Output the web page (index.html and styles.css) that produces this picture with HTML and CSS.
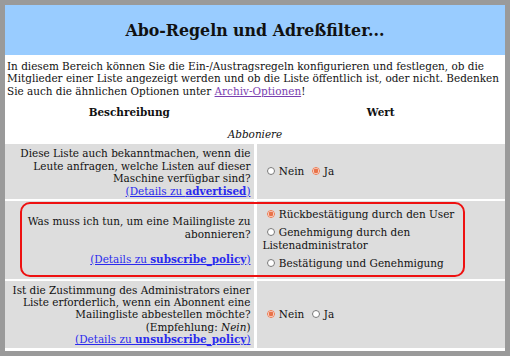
FILE: index.html
```html
<!doctype html>
<html lang="de">
<head>
    <meta charset="UTF-8">
    <title>Abo-Regeln und Adreßfilter</title>
    <link rel="stylesheet" href="styles.css">
</head>
<body>
    <div class="page">
        <div class="banner"><h2>Abo-Regeln und Adreßfilter...</h2></div>
        <p class="intro">In diesem Bereich können Sie die Ein-/Austragsregeln konfigurieren und festlegen, ob die Mitglieder einer Liste angezeigt werden und ob die Liste öffentlich ist, oder nicht. Bedenken Sie auch die ähnlichen Optionen unter <a class="visited" href="#">Archiv-Optionen</a>!</p>
        <table class="opts">
            <tr>
                <th>Beschreibung</th>
                <th>Wert</th>
            </tr>
            <tr>
                <td colspan="2" class="section"><em>Abboniere</em></td>
            </tr>
            <tr>
                <td class="desc">Diese Liste auch bekanntmachen, wenn die Leute anfragen, welche Listen auf dieser Maschine verfügbar sind?<br><a href="#">(Details zu <strong>advertised</strong>)</a></td>
                <td class="val">
                    <input type="radio" name="advertised"> Nein
                    <input type="radio" name="advertised" checked> Ja
                </td>
            </tr>
            <tr>
                <td class="desc">Was muss ich tun, um eine Mailingliste zu abonnieren?<br><br><a href="#">(Details zu <strong>subscribe_policy</strong>)</a></td>
                <td class="val list">
                    <div class="opt"><input type="radio" name="subscribe" checked> Rückbestätigung durch den User</div>
                    <div class="opt"><input type="radio" name="subscribe"> Genehmigung durch den Listenadministrator</div>
                    <div class="opt"><input type="radio" name="subscribe"> Bestätigung und Genehmigung</div>
                    <span class="ring"></span>
                </td>
            </tr>
            <tr>
                <td class="desc">Ist die Zustimmung des Administrators einer Liste erforderlich, wenn ein Abonnent eine Mailingliste abbestellen möchte?<br>(Empfehlung: <em>Nein</em>)<br><a href="#">(Details zu <strong>unsubscribe_policy</strong>)</a></td>
                <td class="val">
                    <input type="radio" name="unsubscribe" checked> Nein
                    <input type="radio" name="unsubscribe"> Ja
                </td>
            </tr>
        </table>
    </div>
</body>
</html>
```

FILE: styles.css
```css
body{
    margin: 0;
    background: #9a9a9a;
    font-family: "DejaVu Serif", serif;
    font-size: 10.45px;
    color: #111;
}
.page{
    margin: 5px;
    background: #ffffff;
    padding-bottom: 1px;
}
.banner{
    height: 50px;
    background: #99ccff;
    display: flex;
    align-items: center;
    justify-content: center;
}
.banner h2{
    margin: 0;
    font-size: 15.8px;
}
.intro{
    margin: 0;
    padding: 5px 2px 0;
    line-height: 12.3px;
}
a{
    color: #2a2aee;
}
a.visited{
    color: #7a3eb0;
}
.opts{
    width: calc(100% + 6px);
    margin: 4px -3px 0;
    border-spacing: 3px 2px;
}
.opts th{
    font-size: 10.45px;
    padding: 3px;
}
.opts td{
    background: #dddddd;
    line-height: 12.4px;
}
.opts .section{
    background: #ffffff;
    text-align: center;
    padding: 5px 0 2px;
}
.opts .desc{
    width: 50%;
    text-align: right;
    padding: 3px 3px 2px;
}
.opts .val{
    padding: 4px 6px;
    position: relative;
}
.opts .list{
    padding: 7px 6px 9px;
}
.opts input{
    width: 8px;
    height: 8px;
    margin: 0 1px 0 4px;
    accent-color: #e8734a;
}
.opt{
    margin-bottom: 6px;
}
.opt:last-of-type{
    margin-bottom: 0;
}
.ring{
    position: absolute;
    left: -237px;
    right: 40px;
    top: 1px;
    bottom: 2px;
    border: 2px solid #ee1111;
    border-radius: 10px;
}
```
